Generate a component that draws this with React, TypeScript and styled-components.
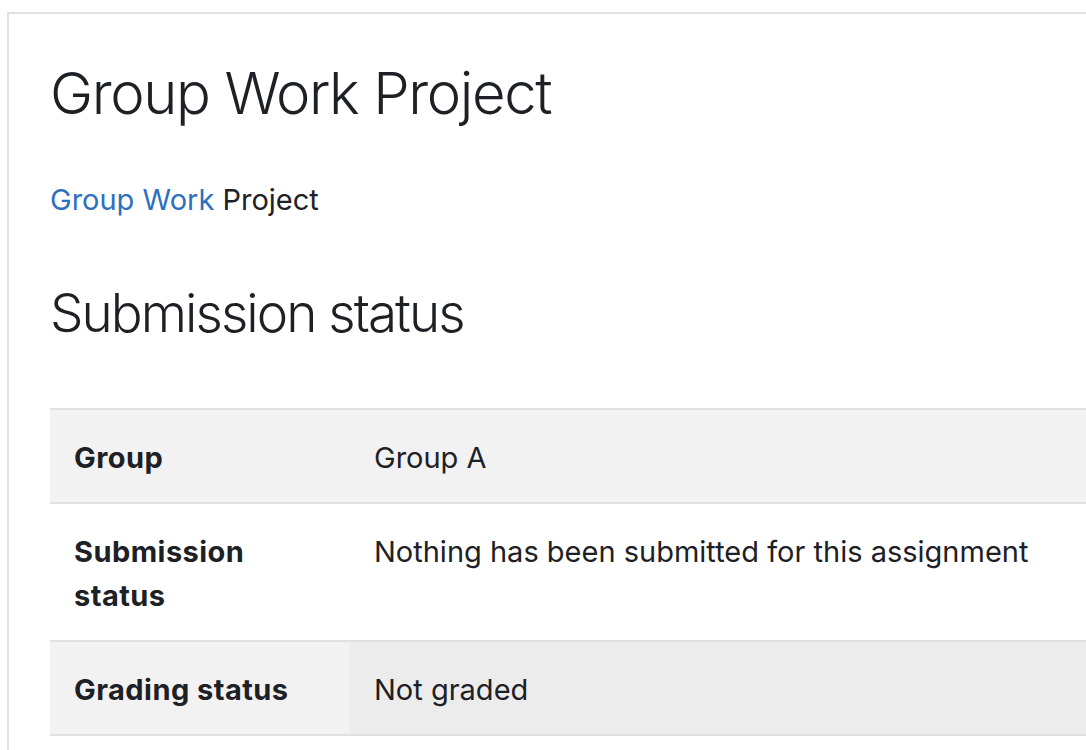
import React from 'react'
import styled, { createGlobalStyle } from 'styled-components'

const GlobalStyle = createGlobalStyle`
  html, body {
    margin: 0;
    padding: 0;
    background: #ffffff;
    overflow: hidden;
  }
  body {
    font-family: Inter, "Noto Sans", "Liberation Sans", sans-serif;
    color: #1d2125;
  }
`

const Page = styled.div`
  padding: 12px 0 0 7px;
  width: 1240px;
`

const Region = styled.section`
  border: 2px solid #e1e1e1;
  border-right: none;
  padding: 45px 40px 40px 41px;
  min-height: 800px;
`

const PageTitle = styled.h1`
  margin: 0;
  font-size: 58px;
  font-weight: 300;
  line-height: 1.2;
  letter-spacing: -1.4px;
`

const Crumbs = styled.nav`
  margin-top: 49px;
  font-size: 29px;
  line-height: 1.5;
`

const CrumbLink = styled.a`
  color: #2f6fc0;
  text-decoration: none;
`

const SectionTitle = styled.h2`
  margin: 61px 0 0;
  font-size: 53px;
  font-weight: 300;
  line-height: 1.2;
  letter-spacing: -1.95px;
`

const Table = styled.table`
  margin-top: 62px;
  width: 100%;
  border-collapse: collapse;
  font-size: 29px;
  line-height: 44px;
`

const Row = styled.tr<{ $striped?: boolean }>`
  background: ${(p) => (p.$striped ? '#f2f2f2' : '#ffffff')};
  border-top: 2px solid #dee2e6;
  border-bottom: 2px solid #dee2e6;
`

const Label = styled.th`
  width: 252px;
  padding: 26px 24px 22px;
  text-align: left;
  vertical-align: top;
  font-weight: 700;
  letter-spacing: 0.45px;
`

const Value = styled.td<{ $hover?: boolean }>`
  padding: 26px 24px 22px;
  vertical-align: top;
  background: ${(p) => (p.$hover ? '#ececec' : 'transparent')};
`

const rows = [
  { label: 'Group', value: 'Group A', striped: true },
  { label: 'Submission status', value: 'Nothing has been submitted for this assignment' },
  { label: 'Grading status', value: 'Not graded', striped: true, hover: true },
]

const App: React.FC = () => {
  return (
    <>
      <GlobalStyle />
      <Page>
        <Region>
          <PageTitle>Group Work Project</PageTitle>
          <Crumbs>
            <CrumbLink href="#">Group Work</CrumbLink> Project
          </Crumbs>
          <SectionTitle>Submission status</SectionTitle>
          <Table>
            <tbody>
              {rows.map((r) => (
                <Row key={r.label} $striped={r.striped}>
                  <Label>{r.label}</Label>
                  <Value $hover={r.hover}>{r.value}</Value>
                </Row>
              ))}
            </tbody>
          </Table>
        </Region>
      </Page>
    </>
  )
}

export default App
